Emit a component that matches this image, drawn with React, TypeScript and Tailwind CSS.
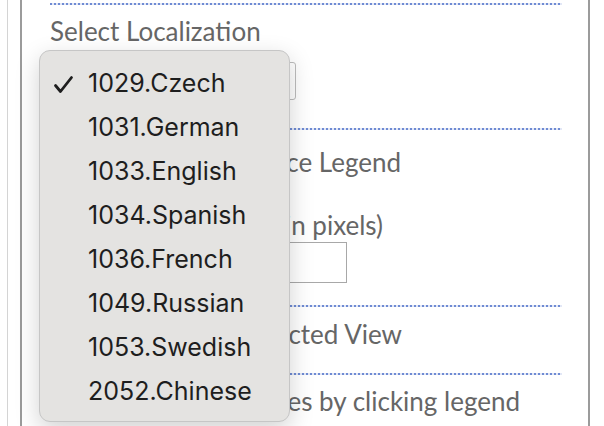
import React from 'react';

const languages = [
  '1029.Czech',
  '1031.German',
  '1033.English',
  '1034.Spanish',
  '1036.French',
  '1049.Russian',
  '1053.Swedish',
  '2052.Chinese',
];

function Dotted() {
  return (
    <div className="h-[2px] w-full bg-[repeating-linear-gradient(to_right,#6f8bd3_0px,#6f8bd3_2px,#e2e7f6_2px,#e2e7f6_4px)]" />
  );
}

// checkbox row; the label is set to end where the reference text ends
function CheckRow({ label, width }: { label: string; width: string }) {
  return (
    <div className={`flex h-[32px] items-center justify-between ${width}`}>
      <span className="h-[20px] w-[20px] shrink-0 rounded-[3px] border border-[#999] bg-white" />
      <span className="whitespace-nowrap text-[26px] leading-[32px] text-[#666]">{label}</span>
    </div>
  );
}

export default function App() {
  const selected = '1029.Czech';

  return (
    <div className="relative h-[426px] w-[604px] overflow-hidden bg-white font-['Lato',sans-serif]">
      <div className="h-full pl-[7px]">
        <div className="h-full border-l border-[#d4d4d4] pl-[12px]">
          {/* Settings panel */}
          <div className="flex h-full w-[570px] flex-col border-x-2 border-[#9b9b9b] pl-[28px] pr-[26px] pt-[3px]">
            <Dotted />
            <div className="mt-[10px] text-[26px] leading-[32px] text-[#666]">Select Localization</div>
            <div className="mt-[15px] h-[38px] w-[246px] rounded-[3px] border border-[#bdbdbd] bg-white" />
            <div className="mt-[28px]">
              <Dotted />
            </div>

            <div className="mt-[16px]">
              <CheckRow label="Show Performance Legend" width="w-[351px]" />
            </div>
            <div className="mt-[31px] w-[333px] whitespace-nowrap text-right text-[26px] leading-[32px] text-[#666]">
              Legend Font Size (in pixels)
            </div>
            <div className="mt-[1px] h-[41px] w-[297px] border border-[#a8a8a8] bg-white" />
            <div className="mt-[22px]">
              <Dotted />
            </div>

            <div className="mt-[11px]">
              <CheckRow label="Always Show Selected View" width="w-[352px]" />
            </div>
            <div className="mt-[23px]">
              <Dotted />
            </div>

            <div className="mt-[10px]">
              <CheckRow label="Allow hiding series by clicking legend" width="w-[470px]" />
            </div>
          </div>
        </div>
      </div>

      {/* Open select menu */}
      <div className="absolute left-[39px] top-[50px] h-[372px] w-[251px] rounded-[11px] border border-[#c6c6c6] bg-[#e4e3e1] pt-[11px] shadow-[0_8px_24px_rgba(0,0,0,0.18)]">
        {languages.map((lang) => (
          <div
            key={lang}
            className="relative flex h-[44px] items-center pl-[48px] font-['Inter',sans-serif] text-[25px] text-[#1e1e1e]"
          >
            {lang === selected && (
              <svg
                className="absolute left-[13px] top-[13px]"
                width="21"
                height="19"
                viewBox="0 0 21 19"
                fill="none"
                stroke="#1e1e1e"
                strokeWidth="2.8"
                strokeLinecap="round"
                strokeLinejoin="round"
              >
                <path d="M2.5 10.5 L7.5 16.5 L18.5 2.5" />
              </svg>
            )}
            {lang}
          </div>
        ))}
      </div>
    </div>
  );
}
